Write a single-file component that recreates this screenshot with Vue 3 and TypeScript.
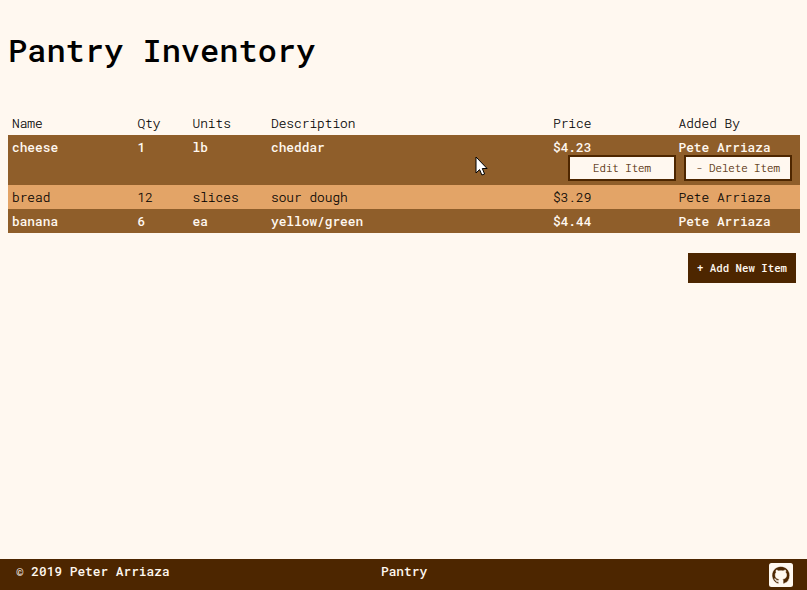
<script setup lang="ts">
interface PantryItem {
  name: string
  qty: number
  units: string
  description: string
  price: string
  addedBy: string
}

const headings: string[] = ['Name', 'Qty', 'Units', 'Description', 'Price', 'Added By']

const items: PantryItem[] = [
  { name: 'cheese', qty: 1, units: 'lb', description: 'cheddar', price: '$4.23', addedBy: 'Pete Arriaza' },
  { name: 'bread', qty: 12, units: 'slices', description: 'sour dough', price: '$3.29', addedBy: 'Pete Arriaza' },
  { name: 'banana', qty: 6, units: 'ea', description: 'yellow/green', price: '$4.44', addedBy: 'Pete Arriaza' },
]

const selected = 'cheese'
</script>

<template>
  <div class="page">
    <main class="content">
      <h1 class="title">Pantry Inventory</h1>
      <section class="inventory">
        <div class="row heading">
          <span v-for="h in headings" :key="h">{{ h }}</span>
        </div>
        <div v-for="item in items" :key="item.name" class="entry">
          <div class="row">
            <span>{{ item.name }}</span>
            <span>{{ item.qty }}</span>
            <span>{{ item.units }}</span>
            <span>{{ item.description }}</span>
            <span>{{ item.price }}</span>
            <span>{{ item.addedBy }}</span>
          </div>
          <div v-if="item.name === selected" class="actions">
            <button class="btn">Edit Item</button>
            <button class="btn">- Delete Item</button>
          </div>
        </div>
      </section>
      <div class="add">
        <button class="btn primary">+ Add New Item</button>
      </div>
    </main>
    <footer class="footer">
      <span class="copyright">© 2019 Peter Arriaza</span>
      <span class="brand">Pantry</span>
      <svg class="github" viewBox="0 0 24 24" aria-label="GitHub">
        <rect width="24" height="24" rx="2.5" fill="#fff8f0" />
        <path
          transform="translate(3 3.4) scale(1.11)"
          fill="#4d2600"
          stroke="#fff8f0"
          stroke-width="0.5"
          d="M8 0C3.58 0 0 3.58 0 8c0 3.54 2.29 6.53 5.47 7.59.4.07.55-.17.55-.38 0-.19-.01-.82-.01-1.49-2.01.37-2.53-.49-2.69-.94-.09-.23-.48-.94-.82-1.13-.28-.15-.68-.52-.01-.53.63-.01 1.08.58 1.23.82.72 1.21 1.87.87 2.33.66.07-.52.28-.87.51-1.07-1.78-.2-3.64-.89-3.64-3.95 0-.87.31-1.59.82-2.15-.08-.2-.36-1.02.08-2.12 0 0 .67-.21 2.2.82.64-.18 1.32-.27 2-.27s1.36.09 2 .27c1.53-1.04 2.2-.82 2.2-.82.44 1.1.16 1.92.08 2.12.51.56.82 1.27.82 2.15 0 3.07-1.87 3.75-3.65 3.95.29.25.54.73.54 1.48 0 1.07-.01 1.93-.01 2.2 0 .21.15.46.55.38A8.01 8.01 0 0 0 16 8c0-4.42-3.58-8-8-8z"
        />
      </svg>
    </footer>
    <svg class="pointer" viewBox="0 0 13 20">
      <path d="M1 1v16l3.6-3.4 2.3 5.4 2.7-1L7.3 12.5h4.8z" fill="#fff" stroke="#000" stroke-width="1" />
    </svg>
  </div>
</template>

<style>
body {
  margin: 0;
  background: #fff8f0;
}
</style>

<style scoped>
.page {
  position: relative;
  display: flex;
  flex-direction: column;
  height: 590px;
  box-sizing: border-box;
  background: #fff8f0;
  color: #000;
  font-family: "Roboto Mono", "DejaVu Sans Mono", monospace;
  font-size: 12.8px;
  font-weight: 300;
}
.content {
  flex: 1;
  padding: 29px 7px 0 8px;
}
.title {
  margin: 0 0 40px;
  font-size: 32px;
  line-height: 42px;
  font-weight: 500;
}
.row {
  display: grid;
  grid-template-columns: 125.5px 55px 78.5px 282px 125.5px 1fr;
  padding-left: 4px;
  height: 24px;
  line-height: 25px;
  white-space: pre;
  -webkit-text-stroke: 0.15px currentColor;
}
.entry:nth-child(even) {
  background: #8f5e2a;
  color: #fff8f0;
  font-weight: 500;
}
.entry:nth-child(even) .row {
  -webkit-text-stroke: 0;
}
.entry:nth-child(odd) {
  background: #e3a467;
}
.actions {
  display: flex;
  justify-content: flex-end;
  gap: 8px;
  height: 30px;
  margin-top: -4px;
  padding-right: 8px;
}
.btn {
  width: 108px;
  height: 26px;
  padding: 0;
  border: 2px solid #4d2600;
  background: #fff8f0;
  color: #4d2600;
  font-family: inherit;
  font-size: 10.72px;
  font-weight: 300;
  white-space: nowrap;
  -webkit-text-stroke: 0.15px currentColor;
}
.add {
  display: flex;
  justify-content: flex-end;
  padding: 20px 4px 0 0;
}
.primary {
  height: 30px;
  background: #4d2600;
  color: #fff8f0;
  font-weight: 500;
  -webkit-text-stroke: 0;
}
.footer {
  display: grid;
  grid-template-columns: 365px 1fr 24px;
  height: 31px;
  padding: 0 14px 0 16px;
  background: #4d2600;
  color: #fff8f0;
  font-weight: 500;
  line-height: 25px;
}
.github {
  width: 24px;
  height: 24px;
  margin-top: 4px;
}
.pointer {
  position: absolute;
  left: 475px;
  top: 156px;
  width: 13px;
  height: 20px;
}
</style>
